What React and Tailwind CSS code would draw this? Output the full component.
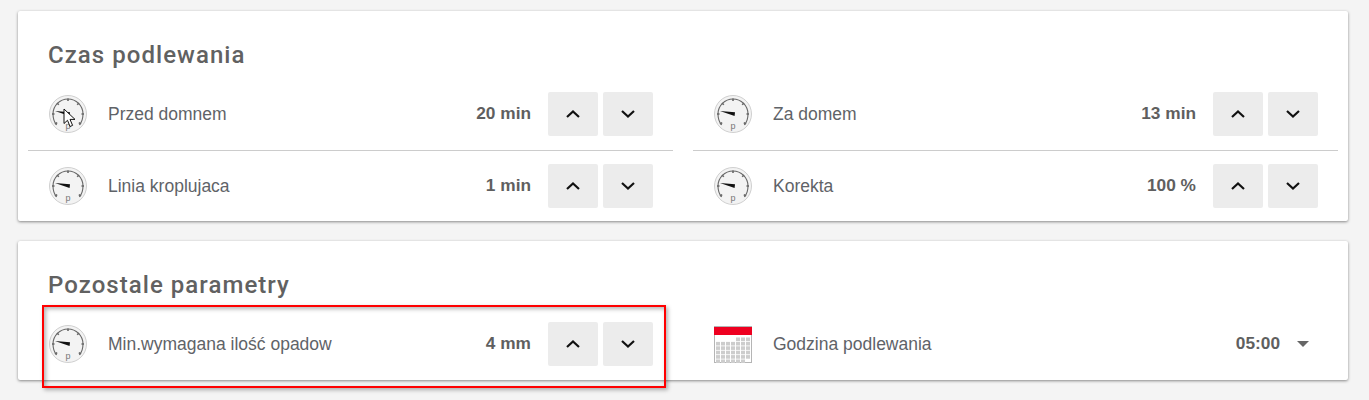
const Gauge = () => (
  <svg width="38" height="38" viewBox="0 0 38 38" className="shrink-0">
    <circle cx="19" cy="19" r="18.5" fill="#f3f3f3" stroke="#cfcfcf" />
    <path d="M7.7 30 C5 27 4 23 4 19 A15 15 0 0 1 34 19 C34 23 33 27 30.3 30" fill="none" stroke="#666" strokeWidth="1.1" />
    <path d="M19 3.5v2.5M8 8l1.8 1.8M30 8l-1.8 1.8M3 19h2.5M32.5 19h2.5M6 29l2.2-1.4M32 29l-2.2-1.4" stroke="#666" strokeWidth="1.6" />
    <path d="M6 16 L21 17.2 L20.6 21 Z" fill="#111" />
    <text x="19" y="34" textAnchor="middle" fontSize="9" fill="#777" fontFamily="Liberation Sans, sans-serif">p</text>
  </svg>
)

const Calendar = () => {
  const cells = []
  for (let r = 0; r < 6; r++) {
    for (let c = 0; c < 7; c++) {
      if (r === 0 && c < 4) continue
      if (r === 5 && c === 6) continue
      cells.push(<rect key={`${r}-${c}`} x={2 + c * 5} y={11.5 + r * 4.4} width="4" height="3.6" fill="#cdcdcd" />)
    }
  }
  return (
    <svg width="38" height="37" viewBox="0 0 38 37" className="shrink-0">
      <rect x="0.5" y="0.5" width="37" height="36" fill="#fff" stroke="#b5b5b5" />
      <rect x="0" y="1" width="38" height="8" fill="#ee0020" />
      {cells}
    </svg>
  )
}

const Chevron = ({ up }) => (
  <svg width="14" height="8" viewBox="0 0 14 8" fill="none">
    <path d={up ? 'M1 7L7 1.5L13 7' : 'M1 1L7 6.5L13 1'} stroke="#111" strokeWidth="2.2" />
  </svg>
)

const Row = ({ icon, label, value, divider, children }) => (
  <div className={`flex items-center pl-[21px] pr-5 ${divider ? 'h-[72px] border-b border-[#cccccc] pb-px' : 'h-[70px]'}`}>
    {icon}
    <span className="ml-[21px] flex-1 text-[17.5px] text-[#5f6368]">{label}</span>
    <span className="text-[17.3px] font-bold text-[#5f5f5f]">{value}</span>
    {children || (
      <div className="ml-[17px] flex gap-[5px]">
        <button type="button" className="flex h-11 w-[50px] items-center justify-center rounded-[2px] bg-[#ececec]">
          <Chevron up />
        </button>
        <button type="button" className="flex h-11 w-[50px] items-center justify-center rounded-[2px] bg-[#ececec]">
          <Chevron />
        </button>
      </div>
    )}
  </div>
)

const Card = ({ title, children }) => (
  <section className="rounded-[2px] bg-white px-[10px] shadow-[0_1px_3px_rgba(0,0,0,0.45)]">
    <h2 className="flex h-[68px] items-end pb-[10px] pl-5 font-['Roboto',sans-serif] text-[24px] leading-7 font-medium tracking-[1.05px] text-[#616161]">
      {title}
    </h2>
    <div className="grid grid-cols-2 gap-x-5">{children}</div>
  </section>
)

const App = () => {
  return (
    <div className="relative h-[400px] w-[1369px] overflow-hidden bg-[#f4f4f4] pt-[11px] pr-[21px] pl-[18px] font-['Liberation_Sans',Arial,sans-serif]">
      <div className="flex flex-col gap-5">
        <Card title="Czas podlewania">
          <Row icon={<Gauge />} label="Przed domnem" value="20 min" divider />
          <Row icon={<Gauge />} label="Za domem" value="13 min" divider />
          <Row icon={<Gauge />} label="Linia kroplujaca" value="1 min" />
          <Row icon={<Gauge />} label="Korekta" value="100 %" />
        </Card>
        <Card title="Pozostale parametry">
          <Row icon={<Gauge />} label="Min.wymagana ilość opadow" value="4 mm" />
          <Row icon={<Calendar />} label="Godzina podlewania" value="05:00">
            <span className="mr-[9px] ml-[17px] h-0 w-0 border-x-[6px] border-t-[6px] border-x-transparent border-t-[#666666]" />
          </Row>
          <div className="col-span-2 h-px" />
        </Card>
      </div>
      {/* annotation + mouse cursor from the original capture */}
      <div className="absolute top-[305px] left-[42px] h-[83px] w-[624px] border-2 border-[#ff0000] shadow-[2px_2px_4px_rgba(0,0,0,0.3),inset_2px_2px_4px_rgba(0,0,0,0.3)]" />
      <svg width="14" height="20" viewBox="0 0 14 20" className="absolute top-[108px] left-[63px]">
        <path d="M1 1V15.5L4.5 12.3L7 18.5L9.6 17.4L7 11.4H12Z" fill="#fff" stroke="#111" strokeWidth="1" />
      </svg>
    </div>
  )
}

export default App
